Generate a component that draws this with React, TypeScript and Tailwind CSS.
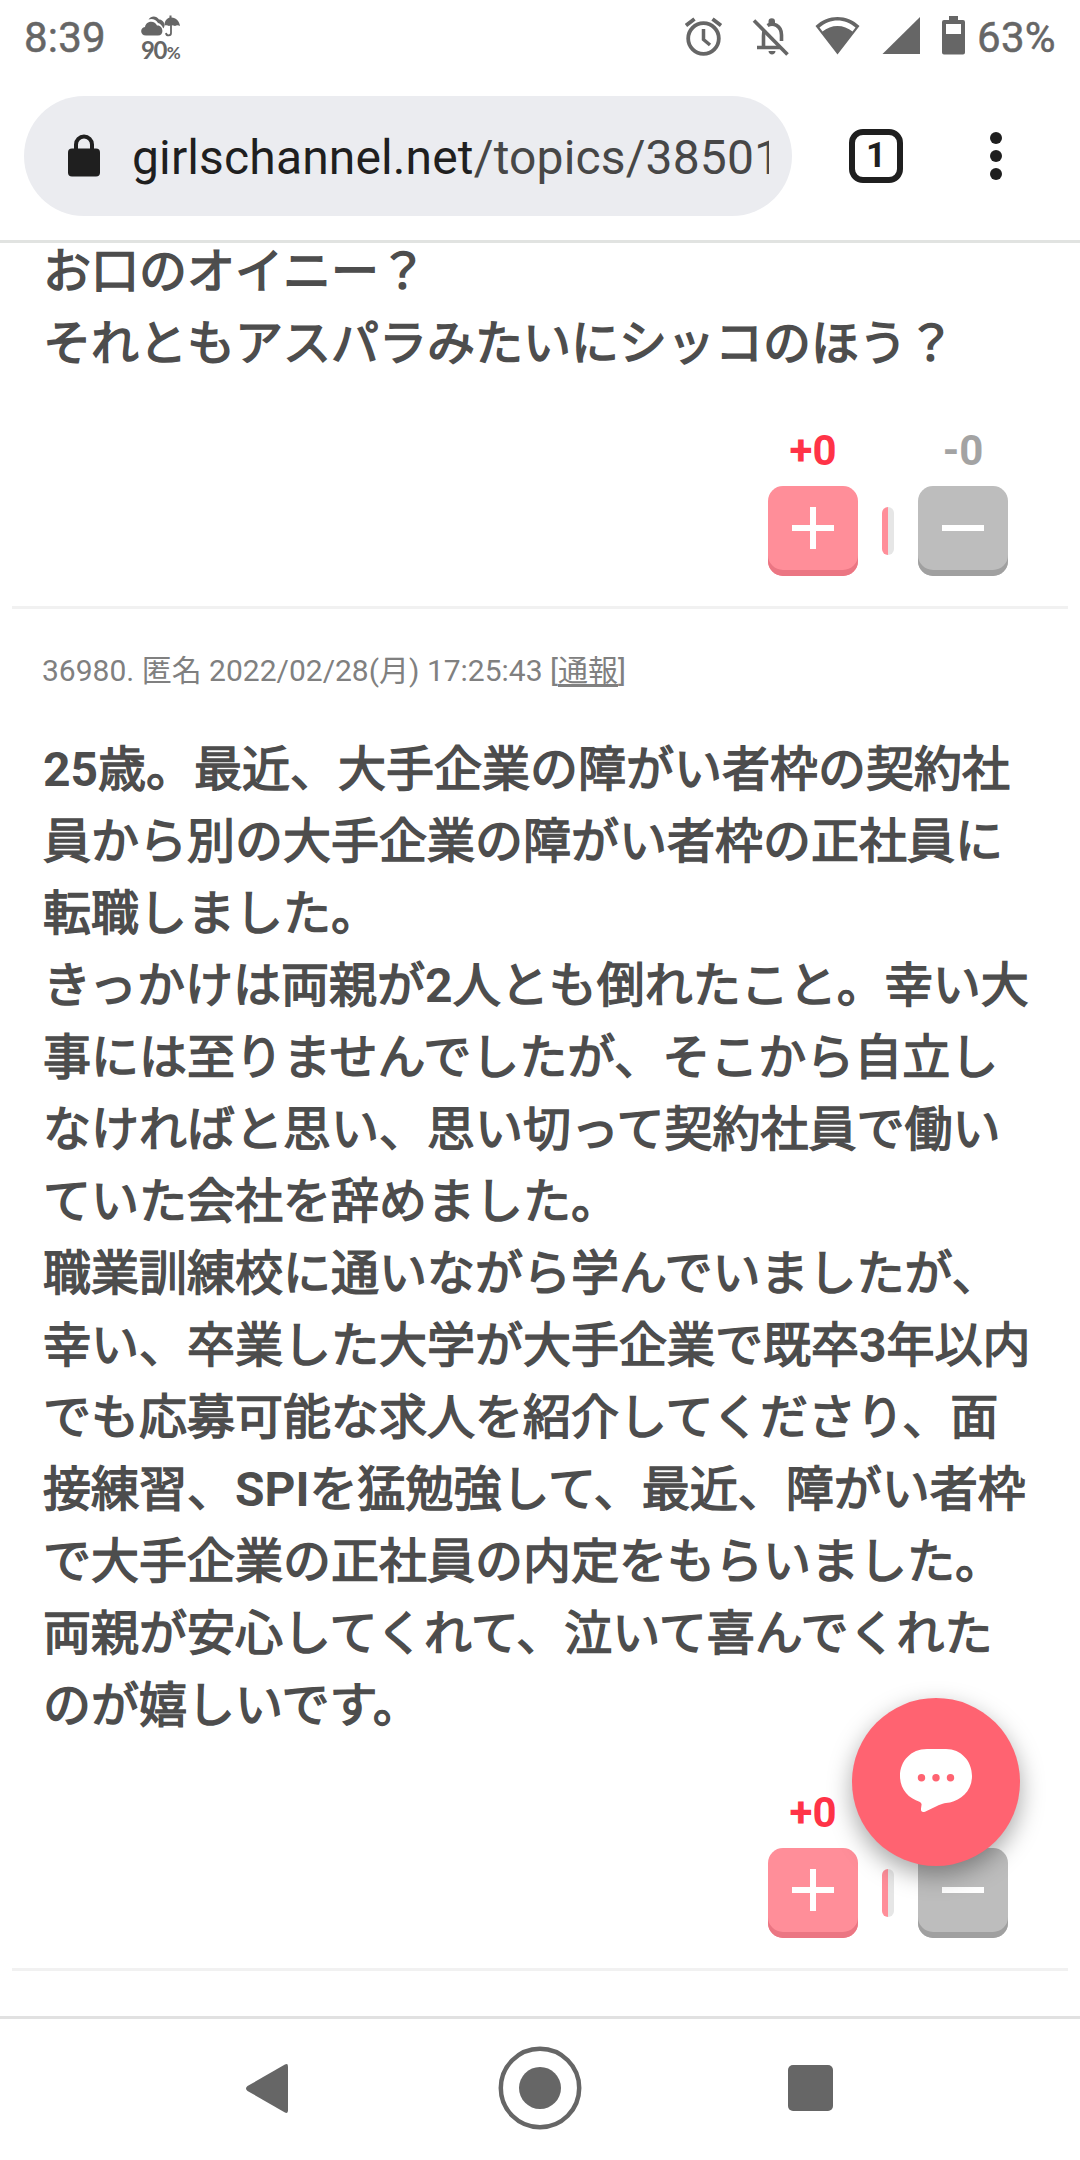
import React from "react";

interface VoteRowProps {
  plus: number;
  minus: number;
}

const TopStatusBar = () => {
  return (
    <div className="flex h-[75px] items-start justify-between px-6 text-[#666666]">
      <div className="flex items-start">
        <span className="mt-[13px] w-[82px] text-[42px] leading-[50px] tracking-[0.2px] [-webkit-text-stroke:0.5px_#666666]">
          8:39
        </span>
        {/* Weather */}
        <div className="mt-[15px] ml-[35px] w-[42px]">
          <svg width="40" height="22" viewBox="0 0 40 22" fill="currentColor">
            <path d="M7.500 4.500C10 0.500 15.500 0.500 18 4.500C21 4.500 23.500 7 23.500 10C23.500 11.500 23 12.500 22.300 13.500C21 10 19 8.500 17 8C15 4.500 11 3 7.500 4.500Z" />
            <path d="M5 20.500C-1 20.500-1.500 13 4 12C5 5.500 14 5 16 10.500C22.500 10 23.500 20.500 17 20.500Z" />
            <path d="M23.500 10.500C23.500 5.500 26 3.500 28.500 2.500V0.500H30.500V2.500C35 3 38.500 6 39 11C37.500 10 35.500 10 34 11C32 10 29.500 10 28 11C26.500 10 25 10 23.500 10.500Z" />
            <path d="M30 10V18C30 21 25.500 21.500 25 18" fill="none" stroke="currentColor" strokeWidth="1.800" />
          </svg>
          <div className="mt-[1px] flex items-baseline font-['Lato'] text-[24px] leading-[24px] font-bold tracking-[-1.500px]">
            90<span className="ml-[1px] text-[17px] tracking-normal">%</span>
          </div>
        </div>
      </div>

      <div className="flex items-start">
        {/* Alarm */}
        <svg className="mt-[16px]" width="39" height="40" viewBox="0 0 39 40" fill="none" stroke="currentColor">
          <circle cx="18.500" cy="22.500" r="15.300" strokeWidth="3.800" />
          <path d="M18.500 13V23.500L25 29" strokeWidth="3.500" />
          <path d="M1 9.500L9.500 3M36 9.500L27.500 3" strokeWidth="3.800" />
        </svg>
        {/* Muted bell */}
        <svg className="mt-[16px] ml-[28px]" width="38" height="41" viewBox="0 0 38 41" fill="none" stroke="currentColor" strokeWidth="3.600">
          <path d="M2 4.500L35.500 38.500" />
          <path d="M11.500 31V20C11.500 17.500 11.700 15.500 12.500 14M5 31.500H28" />
          <path d="M15.500 9.500C21 6 29.500 9.500 29.500 19V25" />
          <path d="M16.500 8V5.500A3 3 0 0 1 23 5.500V8ZM16.500 35H23.500C23.500 39.500 16.500 39.500 16.500 35Z" fill="currentColor" stroke="none" />
        </svg>
        {/* Wifi */}
        <svg className="mt-[16px] ml-[25px]" width="46" height="39" viewBox="0 0 46 39" fill="currentColor">
          <path fillRule="evenodd" d="M0.500 10C13-2 32-2 44.500 10L22.500 38.500ZM4.500 11.500L7.500 15.500C16 8 29 8 37.500 15.500L40.500 11.500C30 2 15 2 4.500 11.500Z" />
        </svg>
        {/* Signal */}
        <svg className="mt-[16px] ml-[21px]" width="39" height="39" viewBox="0 0 39 39" fill="currentColor">
          <path d="M38 1V38H0.500Z" />
        </svg>
        {/* Battery */}
        <svg className="mt-[16px] ml-[21px]" width="23" height="39" viewBox="0 0 23 39" fill="currentColor">
          <path fillRule="evenodd" d="M7 0H16V4H21Q23 4 23 6V36.500Q23 38.500 21 38.500H2Q0 38.500 0 36.500V6Q0 4 2 4H7ZM4 8V18H19V8Z" />
        </svg>
        <span className="mt-[13px] ml-[12px] w-[79px] text-[42px] leading-[50px] tracking-[0.3px] [-webkit-text-stroke:0.5px_#666666]">
          63%
        </span>
      </div>
    </div>
  );
};

const AddressBar = () => {
  return (
    <div className="flex h-[168px] items-start border-b-[3px] border-[#e1e3e1] pt-[21px] pl-6">
      <div className="flex h-[120px] w-[768px] items-center rounded-full bg-[#ebecf0] pl-[44px]">
        <svg className="mt-[-2px]" width="32" height="43" viewBox="0 0 32 43">
          <rect x="0" y="14.500" width="32" height="28" rx="4" fill="#1f1f1f" />
          <path d="M8 16V10.500A8 8 0 0 1 24 10.500V16" fill="none" stroke="#1f1f1f" strokeWidth="4" />
        </svg>
        <div className="mt-[3px] ml-[32px] w-[637px] overflow-hidden text-[48px] leading-[60px] tracking-[0.14px] whitespace-nowrap text-[#1f1f1f]">
          girlschannel.net<span className="text-[#474747]">/topics/38501</span>
        </div>
      </div>
      <div className="mt-[33px] ml-[57px] flex h-[54px] w-[54px] items-center justify-center rounded-[14px] border-[6px] border-[#1f1f1f] pt-[1px] text-[35px] font-bold text-[#1f1f1f]">
        1
      </div>
      <div className="mt-[36px] ml-[87px] flex flex-col gap-[6px]">
        <span className="h-3 w-3 rounded-full bg-[#1f1f1f]" />
        <span className="h-3 w-3 rounded-full bg-[#1f1f1f]" />
        <span className="h-3 w-3 rounded-full bg-[#1f1f1f]" />
      </div>
    </div>
  );
};

const VoteRow = ({ plus, minus }: VoteRowProps) => {
  return (
    <div className="flex items-end justify-end pt-[48px] pr-[72px] pb-[30px] text-center text-[42px] leading-[50px] font-bold">
      <div className="w-[90px]">
        <div className="mb-[10px] text-[#ff3347]">+{plus}</div>
        <button className="flex h-[90px] w-full justify-center rounded-[15px] bg-[#ff8e99] pt-[21px] shadow-[inset_0_-6px_0_#eb7683]">
          <svg width="42" height="42" viewBox="0 0 42 42" fill="white">
            <path d="M18 0H24V18H42V24H24V42H18V24H0V18H18Z" />
          </svg>
        </button>
      </div>
      {/* Ratio */}
      <div className="mx-6 mb-[21px] flex h-[48px] w-3 overflow-hidden rounded-[6px]">
        <div className="w-1/2 bg-[#ff8e99]" />
        <div className="w-1/2 bg-[#e6e6e6]" />
      </div>
      <div className="w-[90px]">
        <div className="mb-[10px] text-[#a3a3a3]">-{minus}</div>
        <button className="flex h-[90px] w-full justify-center rounded-[15px] bg-[#bdbdbd] pt-[39px] shadow-[inset_0_-6px_0_#a0a0a0]">
          <span className="h-[6px] w-[42px] bg-white" />
        </button>
      </div>
    </div>
  );
};

// Latin letters and digits inside a comment
const Latin = ({ children }: { children: React.ReactNode }) => (
  <span className="font-bold [-webkit-text-stroke:0px]">{children}</span>
);

const CommentText = ({ lines }: { lines: React.ReactNode[] }) => {
  return (
    <div className="pl-[43px] text-[48px] leading-[75px] whitespace-nowrap text-[#4d4d4d] [-webkit-text-stroke:1.5px_#4d4d4d]">
      {lines.map((line, i) => (
        <div key={i} className="h-[72px]">
          {line}
        </div>
      ))}
    </div>
  );
};

const Divider = () => <div className="mx-3 h-[3px] bg-[#f1f1f1]" />;

const firstComment = ["お口のオイニー？", "それともアスパラみたいにシッコのほう？"];

const secondComment = [
  <><Latin>25</Latin>歳。最近、大手企業の障がい者枠の契約社</>,
  "員から別の大手企業の障がい者枠の正社員に",
  "転職しました。",
  <>きっかけは両親が<Latin>2</Latin>人とも倒れたこと。幸い大</>,
  "事には至りませんでしたが、そこから自立し",
  "なければと思い、思い切って契約社員で働い",
  "ていた会社を辞めました。",
  "職業訓練校に通いながら学んでいましたが、",
  <>幸い、卒業した大学が大手企業で既卒<Latin>3</Latin>年以内</>,
  "でも応募可能な求人を紹介してくださり、面",
  <>接練習、<Latin>SPI</Latin>を猛勉強して、最近、障がい者枠</>,
  "で大手企業の正社員の内定をもらいました。",
  "両親が安心してくれて、泣いて喜んでくれた",
  "のが嬉しいです。",
];

const NavigationBar = () => {
  return (
    <div className="flex h-[144px] items-center border-t-[3px] border-[#e1e1e1] pb-[3px] pl-[246px] text-[#666666]">
      <svg width="42" height="49" viewBox="0 0 42 49" fill="currentColor">
        <path d="M38.500 0.800Q42-1.200 42 2.500V46.500Q42 50.200 38.500 48.200L1.500 27Q-1.500 24.500 1.500 22Z" />
      </svg>
      <svg className="ml-[210px]" width="84" height="84" viewBox="0 0 84 84">
        <circle cx="42" cy="42" r="39.200" fill="none" stroke="currentColor" strokeWidth="4.500" />
        <circle cx="42" cy="42" r="21" fill="currentColor" />
      </svg>
      <div className="ml-[206px] h-[46px] w-[45px] rounded-[5px] bg-[#666666]" />
    </div>
  );
};

export default function App() {
  return (
    <div className="relative flex h-[2160px] w-[1080px] flex-col overflow-hidden bg-white font-['Roboto','Noto_Sans_CJK_JP',sans-serif]">
      <TopStatusBar />
      <AddressBar />

      {/* Comments */}
      <div className="flex-1 overflow-hidden">
        <div className="-mt-[9px]">
          <CommentText lines={firstComment} />
          <VoteRow plus={0} minus={0} />
          <Divider />
        </div>

        <div>
          <div className="h-[123px] pt-[39px] pl-[42px] text-[30px] leading-[46px] whitespace-nowrap text-[#808080]">
            36980. 匿名 2022/02/28(月) 17:25:43 [
            <a className="underline decoration-[3px] underline-offset-[3px] [text-decoration-skip-ink:none]">通報</a>]
          </div>
          <CommentText lines={secondComment} />
          <VoteRow plus={0} minus={0} />
          <Divider />
        </div>
      </div>

      <NavigationBar />

      {/* Post a comment */}
      <button className="absolute top-[1698px] left-[852px] flex h-[168px] w-[168px] justify-center rounded-full bg-[#ff6371] pt-[51px] shadow-[0_9px_24px_rgba(0,0,0,0.35)]">
        <svg width="72" height="64" viewBox="0 0 72 64">
          <path
            d="M27 0H46C61 0 72 12 72 27C72 42 61 51 50 53.500C44 54 41 55 37 57L25 62.700Q20.500 64 21 59.500L21.500 56Q22 54.500 20 53C8 49 0 40 0 27C0 12 11 0 27 0Z"
            fill="white"
          />
          <circle cx="21.500" cy="28.700" r="3.700" fill="#ff6371" />
          <circle cx="36" cy="28.700" r="3.700" fill="#ff6371" />
          <circle cx="50.500" cy="28.700" r="3.700" fill="#ff6371" />
        </svg>
      </button>
    </div>
  );
}
